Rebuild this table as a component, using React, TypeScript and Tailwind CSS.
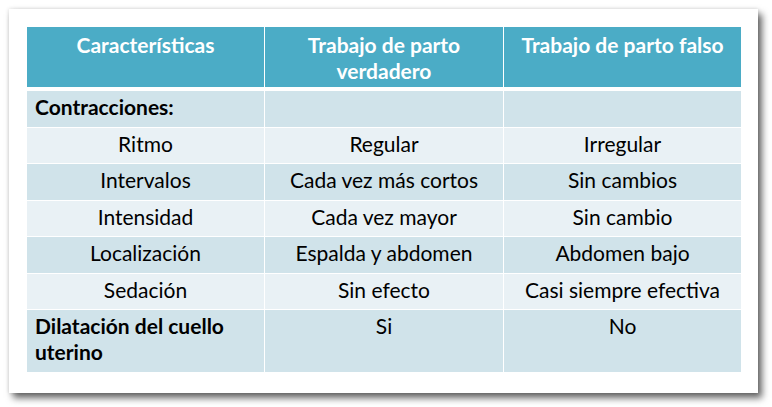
const font = { fontFamily: "Lato, 'Open Sans', sans-serif" };

type Row = { label: string; bold?: boolean; left?: boolean; real: string; fake: string; dark: boolean; tall?: boolean };

const rows: Row[] = [
  { label: "Contracciones:", bold: true, left: true, real: "", fake: "", dark: true },
  { label: "Ritmo", real: "Regular", fake: "Irregular", dark: false },
  { label: "Intervalos", real: "Cada vez más cortos", fake: "Sin cambios", dark: true },
  { label: "Intensidad", real: "Cada vez mayor", fake: "Sin cambio", dark: false },
  { label: "Localización", real: "Espalda y abdomen", fake: "Abdomen bajo", dark: true },
  { label: "Sedación", real: "Sin efecto", fake: "Casi siempre efectiva", dark: false },
  { label: "Dilatación del cuello uterino", bold: true, left: true, real: "Si", fake: "No", dark: true, tall: true },
];

function Cell({ children, dark, left, bold, tall }: { children: React.ReactNode; dark: boolean; left?: boolean; bold?: boolean; tall?: boolean }) {
  return (
    <div
      className={`${dark ? "bg-[#d0e3ea]" : "bg-[#e9f1f5]"} ${tall ? "h-[62px]" : "h-[35.5px]"} ${left ? "text-left pl-2 pr-3" : "text-center px-1"} ${bold ? "font-bold" : ""} pt-[3px] text-[21px] leading-[26px] text-black`}
    >
      {children}
    </div>
  );
}

export default function App() {
  return (
    <div className="min-h-[407px] w-[772px] bg-white pl-[9px] pt-[9px]" style={font}>
      <div className="w-[749px] h-[384px] bg-white pl-[18px] pt-[18px] shadow-[4px_5px_7px_rgba(0,0,0,0.6),0_0_4px_rgba(0,0,0,0.15)]">
        <div className="grid w-[714px] grid-cols-[237px_238px_237px] gap-x-px">
          {["Características", "Trabajo de parto verdadero", "Trabajo de parto falso"].map((h) => (
            <div key={h} className="h-[60px] bg-[#4bacc6] px-[38px] pt-[5px] text-center text-[21px] font-bold leading-[26px] text-white last:px-1">
              {h}
            </div>
          ))}
        </div>
        <div className="mt-[4px] grid w-[714px] grid-cols-[237px_238px_237px] gap-x-px gap-y-px">
          {rows.map((r) => (
            <div key={r.label} className="contents">
              <Cell dark={r.dark} left={r.left} bold={r.bold} tall={r.tall}>{r.label}</Cell>
              <Cell dark={r.dark} tall={r.tall}>{r.real}</Cell>
              <Cell dark={r.dark} tall={r.tall}>{r.fake}</Cell>
            </div>
          ))}
        </div>
      </div>
    </div>
  );
}
